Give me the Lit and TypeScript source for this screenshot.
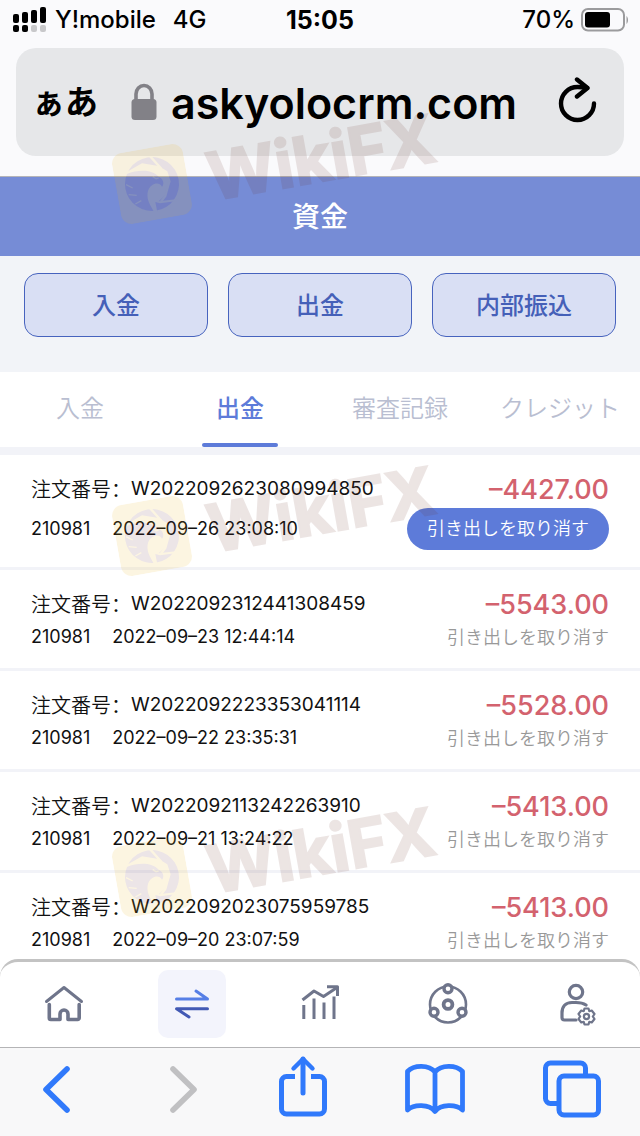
import { LitElement, html, css, svg } from "lit";
import { customElement } from "lit/decorators.js";

interface Order {
  id: string;
  account: string;
  time: string;
  amount: string;
  pending?: boolean;
}

const ORDERS: Order[] = [
  { id: "W2022092623080994850", account: "210981", time: "2022–09–26 23:08:10", amount: "–4427.00", pending: true },
  { id: "W2022092312441308459", account: "210981", time: "2022–09–23 12:44:14", amount: "–5543.00" },
  { id: "W2022092223353041114", account: "210981", time: "2022–09–22 23:35:31", amount: "–5528.00" },
  { id: "W2022092113242263910", account: "210981", time: "2022–09–21 13:24:22", amount: "–5413.00" },
  { id: "W2022092023075959785", account: "210981", time: "2022–09–20 23:07:59", amount: "–5413.00" },
];

const SHARED = css`
  * { box-sizing: border-box; }
  button {
    font: inherit;
    color: inherit;
    background: none;
    border: 0;
    padding: 0;
    margin: 0;
    display: flex;
    align-items: center;
    justify-content: center;
  }
  svg { display: block; flex: none; }
`;

@customElement("phone-header")
class PhoneHeader extends LitElement {
  static styles = [SHARED, css`
    :host { display: block; background: #fafafc; border-bottom: 1px solid #b4b4b8; padding-bottom: 20px; color: #000; }
    .status { display: grid; grid-template-columns: 1fr auto 1fr; align-items: center; height: 40px; padding: 0 12px; font-size: 24px; line-height: 28px; font-weight: 500; }
    .left, .right { display: flex; align-items: center; }
    .left { gap: 8px; }
    .net { margin-left: 9px; }
    .clock { font-size: 25px; font-weight: 700; }
    .right { justify-content: flex-end; gap: 6px; }
    .bar { display: flex; align-items: center; height: 108px; margin: 8px 16px 0; padding: 0 24px 0 16px; border-radius: 20px; background: #e6e7e9; }
    .aa { font-size: 33px; font-weight: 700; line-height: 40px; }
    .lock { margin-left: 33px; }
    .url { flex: 1; min-width: 0; margin: 0 0 0 14px; padding: 2px 0 0; border: 0; background: none; font: inherit; font-size: 43px; line-height: 56px; height: 58px; font-weight: 600; color: #000; outline: 0; }
  `];
  render() {
    return html`
      <div class="status">
        <div class="left">
          <svg width="35" height="26" viewBox="0 0 35 26">
            <rect x="1" y="7" width="6" height="9" rx="2" /><rect x="10" y="5" width="6" height="11" rx="2" />
            <rect x="19" y="3" width="6" height="13" rx="2" /><rect x="28" y="0" width="6" height="16" rx="2" />
            <rect x="1" y="18" width="6" height="7" rx="2" /><rect x="10" y="18" width="6" height="7" rx="2" />
            <rect x="19" y="18" width="6" height="7" rx="2" fill="#c8c8ca" /><rect x="28" y="18" width="6" height="7" rx="2" fill="#c8c8ca" />
          </svg>
          <span>Y!mobile</span><span class="net">4G</span>
        </div>
        <span class="clock">15:05</span>
        <div class="right">
          <span>70%</span>
          <svg width="47" height="24" viewBox="0 0 47 24">
            <rect x="1" y="1" width="42" height="21.500" rx="6" fill="none" stroke="#9b9b9d" stroke-width="2" />
            <rect x="4" y="4" width="25" height="15.500" rx="3" />
            <path d="M45.500 8c2 1.500 2 6.500 0 8z" fill="#9b9b9d" />
          </svg>
        </div>
      </div>
      <div class="bar">
        <button class="aa" aria-label="表示設定">ぁあ</button>
        <svg class="lock" width="26" height="38" viewBox="0 0 26 38">
          <path d="M5 18v-7a8 8.500 0 0 1 16 0v7" fill="none" stroke="#828187" stroke-width="3.600" />
          <rect x="0.500" y="16" width="25" height="21" rx="3.500" fill="#828187" />
        </svg>
        <input class="url" type="text" aria-label="アドレス" value="askyolocrm.com" />
        <button aria-label="再読み込み">
          <svg width="44" height="50" viewBox="0 0 44 50" fill="none" stroke="#000" stroke-width="4.400" stroke-linecap="round" stroke-linejoin="round">
            <path d="M38 26.500a16.500 16.500 0 1 1 -16.500 -16.500Q26 10 31 11" /><path d="M21 2.500L31.500 11L21 19.500" />
          </svg>
        </button>
      </div>`;
  }
}

@customElement("order-row")
class OrderRow extends LitElement {
  static properties = { order: { attribute: false } };
  order!: Order;
  static styles = [SHARED, css`
    :host { display: block; background: #fff; border-bottom: 3px solid #f2f3f8; }
    .row { display: flex; justify-content: space-between; padding: 19px 31px 17px; color: #111; }
    .info { display: flex; flex-direction: column; gap: 4px; }
    .pending .info { gap: 11px; }
    .title { display: flex; font-size: 19px; line-height: 30px; }
    .label { font-family: "Noto Sans CJK SC", sans-serif; font-size: 20px; font-weight: 350; }
    .meta { display: flex; gap: 22px; font-size: 18px; line-height: 28px; }
    .side { display: flex; flex-direction: column; align-items: flex-end; gap: 4px; }
    .pending .side { gap: 2px; }
    .amount { font-size: 27px; line-height: 32px; font-weight: 500; color: #d3626e; }
    .cancel { font-size: 18px; line-height: 26px; font-weight: 350; color: #999; }
    .pending .cancel { height: 42px; padding: 0 20px; border-radius: 21px; background: #5d7bd9; color: #fff; }
    .pending { padding-bottom: 17px; }
  `];
  render() {
    const o = this.order;
    return html`
      <div class="row ${o.pending ? "pending" : ""}">
        <div class="info">
          <div class="title"><span class="label">注文番号：</span><span>${o.id}</span></div>
          <div class="meta"><span>${o.account}</span><span>${o.time}</span></div>
        </div>
        <div class="side">
          <span class="amount">${o.amount}</span>
          <button class="cancel" ?disabled=${!o.pending}>引き出しを取り消す</button>
        </div>
      </div>`;
  }
}

@customElement("brand-mark")
class BrandMark extends LitElement {
  static styles = [SHARED, css`
    :host { display: flex; align-items: center; gap: 20px; opacity: 0.12; transform: rotate(-10deg); transform-origin: 36px 36px; height: 72px; }
    .name { font-size: 66px; line-height: 72px; padding-top: 6px; font-weight: 700; color: #692f26; -webkit-text-stroke: 2px #692f26; stroke-linejoin: round; }
  `];
  render() {
    return html`
      <svg width="72" height="72" viewBox="0 0 72 72">
        <rect width="72" height="72" rx="11" fill="#eeb416" />
        <circle cx="36" cy="36" r="27" fill="#692f40" />
        <g transform="translate(36 36) rotate(10) scale(0.333)">
          <path fill="#eeb416" d="M-76 -36L-30 -62L20 -54L46 -38L56 -8L40 34L20 52L84 44L82 50L24 58L10 54L16 84L6 84L-6 62C-18 40 -16 14 0 4C10 -4 24 -4 30 8C38 0 34 -16 20 -22C0 -44 -40 -44 -76 -30z" />
          <g fill="none" stroke="#eeb416" stroke-width="7">
            <path d="M-8 -86L28 -46M52 -8L40 36L26 54" />
            <path d="M-78 2L-58 12M-70 32L-46 34M-50 60L-32 50" stroke-width="4" />
            <path d="M2 -22L12 -16L20 -18" stroke-width="4" />
          </g>
        </g>
      </svg>
      <span class="name">WikiFX</span>`;
  }
}

const icon = (body: unknown) => html`
  <svg width="48" height="48" viewBox="0 0 48 48" fill="none" stroke="#6f758b" stroke-width="3" stroke-linecap="round" stroke-linejoin="round">${body}</svg>`;

const NAV = [
  { label: "ホーム", body: svg`<path d="M6.500 21.500L24 7.500L41.500 21.500" /><path d="M9.300 24.500V38a1.500 1.500 0 0 0 1.500 1.500H20V34a4 4 0 0 1 8 0v5.500H37.700a1.500 1.500 0 0 0 1.500 -1.500V24.500" stroke-width="3.600" />` },
  { label: "資金", active: true, body: svg`<path d="M8.500 19H39.500L28 11" stroke="#567fe6" /><path d="M39.500 28.800H8.500L21 37" stroke="#4259b4" />` },
  { label: "統計", body: svg`<g stroke-width="3" stroke-linecap="butt"><path d="M7.800 25V39M18 18.500V39M28 22.500V39M38 16.500V39" /><path d="M6.500 20L18 11L27.500 16.500L41 7.500" /><path d="M31 6.800H41.500V16" /></g>` },
  { label: "紹介", body: svg`<circle cx="24" cy="24.500" r="18" stroke-width="2.600" /><g fill="#fff" stroke-width="3.400"><circle cx="24" cy="8.800" r="4" /><circle cx="10" cy="32.300" r="4" /><circle cx="38" cy="32.300" r="4" /><circle cx="24" cy="24.500" r="4.400" stroke-width="3.800" /></g>` },
  { label: "アカウント", body: svg`<g stroke-width="3.200"><circle cx="24" cy="12" r="6.700" /><path d="M34 25C31 23 28 22.500 24 22.500H20C13 22.500 10 27 10 33V37.500A2.500 2.500 0 0 0 12.500 40H24" /></g>
      <g stroke-width="2.200" transform="translate(34.500 36.500)"><path d="M-2 -8H2L2.800 -5.300L5.200 -6L8 -2.500L6.300 0L8 2.500L5.200 6L2.800 5.300L2 8H-2L-2.800 5.300L-5.200 6L-8 2.500L-6.300 0L-8 -2.500L-5.200 -6L-2.800 -5.300z" fill="#fff" /><circle r="2.600" /></g>` },
];

@customElement("app-nav")
class AppNav extends LitElement {
  static styles = [SHARED, css`
    :host { display: block; background: #fff; }
    nav { display: grid; grid-template-columns: repeat(5, 1fr); justify-items: center; padding: 8px 0 9px; border-top: 3px solid #c3c3c3; border-radius: 18px 18px 0 0; }
    .item { width: 68px; height: 68px; border-radius: 10px; }
    .active { background: #f3f4fc; }
  `];
  render() {
    return html`<nav>${NAV.map(n => html`<button class="item ${n.active ? "active" : ""}" aria-label=${n.label}>${icon(n.body)}</button>`)}</nav>`;
  }
}

const TOOLS = [
  { label: "戻る", body: svg`<path d="M40 10L19 30.500L40 51" stroke-width="5.600" />` },
  { label: "進む", off: true, body: svg`<path d="M19 10L40 30.500L19 51" stroke-width="5.600" />` },
  { label: "共有", body: svg`<path d="M22 17.500H13.500a5 5 0 0 0 -5 5V50a5 5 0 0 0 5 5H46.500a5 5 0 0 0 5 -5V22.500a5 5 0 0 0 -5 -5H38" stroke-linecap="butt" /><path d="M30 34V0" /><path d="M20.500 9.500L30 0L39.500 9.500" stroke-width="4.400" />` },
  { label: "ブックマーク", body: svg`<path d="M30 13C24 5.500 9 5.500 2.500 12.500V51C9 45 24 45 30 52.500C36 45 51 45 57.500 51V12.500C51 5.500 36 5.500 30 13zV52" stroke-width="4.800" />` },
  { label: "タブ", body: svg`<path d="M15 44.500H8.500a5 5 0 0 1 -5 -5V9a5 5 0 0 1 5 -5H38.500a5 5 0 0 1 5 5V16" stroke-linecap="butt" /><rect x="17" y="17" width="39.500" height="39" rx="5" />` },
];

@customElement("browser-toolbar")
class BrowserToolbar extends LitElement {
  static styles = [SHARED, css`
    :host { display: block; background: #f8f8f9; border-top: 1px solid #b4b4b6; }
    .tools { display: grid; grid-template-columns: 57fr 70fr 49fr 83fr 54fr 7fr; justify-items: center; padding: 11px 0 17px; }
    svg { overflow: visible; }
    .tool { color: #3079fb; }
    .off { color: #c0c0c2; }
  `];
  render() {
    return html`<div class="tools">${TOOLS.map(t => html`
      <button class="tool ${t.off ? "off" : ""}" aria-label=${t.label} ?disabled=${t.off}>
        <svg width="60" height="60" viewBox="0 0 60 60" fill="none" stroke="currentColor" stroke-width="5" stroke-linecap="round" stroke-linejoin="round">${t.body}</svg>
      </button>`)}</div>`;
  }
}

@customElement("app-root")
class AppRoot extends LitElement {
  static styles = [SHARED, css`
    :host { display: flex; flex-direction: column; position: relative; height: 100vh; overflow: hidden; background: #fff; font-family: Inter, "Noto Sans CJK JP", sans-serif; }
    h1 { margin: 0; background: #768cd6; color: #fff; text-align: center; font-size: 28px; line-height: 40px; padding: 20px 0 19px; font-weight: 500; }
    .actions { display: grid; grid-template-columns: repeat(3, 1fr); gap: 20px; padding: 17px 24px 35px; background: #f2f4f8; }
    .action { height: 64px; padding-top: 2px; border: 1px solid #4763be; border-radius: 14px; background: #d9dff4; color: #4560b8; font-size: 24px; line-height: 36px; font-weight: 500; }
    .tabs { display: grid; grid-template-columns: repeat(4, 1fr); justify-items: center; border-bottom: 8px solid #f2f3f8; }
    .tab { height: 75px; min-width: 76px; padding-top: 2px; border-bottom: 4px solid transparent; font-size: 24px; line-height: 36px; font-weight: 350; color: #b9bed1; white-space: nowrap; position: relative; }
    .on { color: #5d7bd9; font-weight: 500; }
    .on::after { content: ""; position: absolute; left: 0; right: 0; bottom: -4px; height: 4px; border-radius: 2px; background: #5d7bd9; }
    .list { flex: 1; min-height: 0; overflow: hidden; }
    h1, .actions, .tabs, app-nav, browser-toolbar, phone-header { flex: none; }
    .mark { position: absolute; left: 116px; pointer-events: none; }
  `];
  render() {
    return html`
      <phone-header></phone-header>
      <h1>資金</h1>
      <div class="actions">
        ${["入金", "出金", "内部振込"].map(t => html`<button class="action">${t}</button>`)}
      </div>
      <div class="tabs" role="tablist">
        ${["入金", "出金", "審査記録", "クレジット"].map((t, i) => html`<button role="tab" aria-selected=${i === 1} class="tab ${i === 1 ? "on" : ""}">${t}</button>`)}
      </div>
      <div class="list">${ORDERS.map(o => html`<order-row .order=${o}></order-row>`)}</div>
      <app-nav></app-nav>
      <browser-toolbar></browser-toolbar>
      ${[148, 500, 841].map(y => html`<brand-mark class="mark" aria-hidden="true" style="top:${y}px"></brand-mark>`)}`;
  }
}
